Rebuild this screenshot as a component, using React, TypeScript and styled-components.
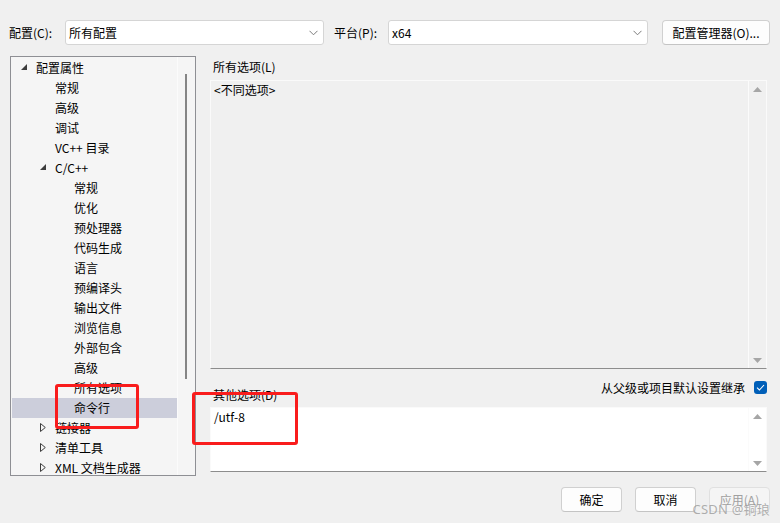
import React from 'react';
import styled, { createGlobalStyle } from 'styled-components';

const GlobalStyle = createGlobalStyle`
  html, body {
    margin: 0;
    padding: 0;
    background: #f0f0f0;
  }
  body {
    font-family: "Noto Sans CJK SC", "Noto Sans", sans-serif;
    font-size: 12px;
    color: #000;
  }
`;

type TreeItem = {
  label: string;
  level: number;
  toggle?: 'open' | 'closed';
  selected?: boolean;
};

const TREE: TreeItem[] = [
  { label: '配置属性', level: 0, toggle: 'open' },
  { label: '常规', level: 1 },
  { label: '高级', level: 1 },
  { label: '调试', level: 1 },
  { label: 'VC++ 目录', level: 1 },
  { label: 'C/C++', level: 1, toggle: 'open' },
  { label: '常规', level: 2 },
  { label: '优化', level: 2 },
  { label: '预处理器', level: 2 },
  { label: '代码生成', level: 2 },
  { label: '语言', level: 2 },
  { label: '预编译头', level: 2 },
  { label: '输出文件', level: 2 },
  { label: '浏览信息', level: 2 },
  { label: '外部包含', level: 2 },
  { label: '高级', level: 2 },
  { label: '所有选项', level: 2 },
  { label: '命令行', level: 2, selected: true },
  { label: '链接器', level: 1, toggle: 'closed' },
  { label: '清单工具', level: 1, toggle: 'closed' },
  { label: 'XML 文档生成器', level: 1, toggle: 'closed' },
];

const Window = styled.div`
  position: relative;
  width: 780px;
  height: 523px;
  overflow: hidden;
  display: flex;
  flex-direction: column;
`;

const TopBar = styled.div`
  display: flex;
  align-items: center;
  height: 25px;
  margin-top: 20px;
  padding-left: 9px;
`;

const FieldLabel = styled.span<{ $w: number }>`
  width: ${(p) => p.$w}px;
  white-space: nowrap;
`;

const Combo = styled.div<{ $w: number }>`
  width: ${(p) => p.$w}px;
  height: 25px;
  box-sizing: border-box;
  background: #fff;
  border: 1px solid #d5d5d5;
  border-radius: 3px;
  display: flex;
  align-items: center;
  justify-content: space-between;
  padding: 0 5px 0 3px;
  margin-right: ${(p) => (p.$w > 259 ? 14 : 10)}px;
`;

const TopButton = styled.div`
  width: 108px;
  height: 25px;
  box-sizing: border-box;
  background: #fdfdfd;
  border: 1px solid #d0d0d0;
  border-bottom-color: #c4c4c4;
  border-radius: 4px;
  display: flex;
  align-items: center;
  justify-content: center;
`;

const Main = styled.div`
  display: flex;
  height: 420px;
  margin-top: 11px;
  padding-left: 10px;
`;

const Tree = styled.div`
  width: 186px;
  box-sizing: border-box;
  border: 1px solid #8e8f94;
  background: #f5f5f5;
  display: flex;
  overflow: hidden;
`;

const TreeList = styled.div`
  flex: 1;
  padding: 1px 0 0 1px;
`;

const TreeRow = styled.div<{ $level: number; $selected?: boolean }>`
  height: 20px;
  box-sizing: border-box;
  display: flex;
  align-items: center;
  padding: 0 0 2px ${(p) => 9 + p.$level * 19}px;
  background: ${(p) => (p.$selected ? '#cccedb' : 'transparent')};
  white-space: nowrap;
`;

const Toggle = styled.span`
  width: 15px;
  height: 18px;
  display: flex;
  align-items: center;
  flex-shrink: 0;
`;

const TreeScroll = styled.div`
  width: 17px;
  border-left: 1px solid #fbfbfb;
  padding-top: 17px;
`;

const Thumb = styled.div`
  width: 2px;
  height: 305px;
  margin-left: 7px;
  background: #858585;
`;

const RightPanel = styled.div`
  width: 557px;
  margin-left: 14px;
  display: flex;
  flex-direction: column;
`;

const PanelLabel = styled.div`
  height: 20px;
  line-height: 18px;
  margin-top: 2px;
  padding-left: 3px;
`;

const TextArea = styled.div<{ $h: number; $bg: string }>`
  height: ${(p) => p.$h}px;
  box-sizing: border-box;
  background: ${(p) => p.$bg};
  border: 1px solid #fafafa;
  border-bottom-color: #8d8d8d;
  display: flex;
  margin-top: ${(p) => (p.$bg === '#fff' ? 0 : 2)}px;
`;

const AreaText = styled.div`
  flex: 1;
  padding: 1px 3px;
  line-height: 16px;
`;

const AreaScroll = styled.div`
  width: 17px;
  border-left: 1px solid #fbfbfb;
  display: flex;
  flex-direction: column;
  justify-content: space-between;
  align-items: center;
  padding: 6px 0 5px;
`;

const OptionsRow = styled.div`
  height: 38px;
  display: flex;
  justify-content: space-between;
`;

const OtherLabel = styled.div`
  align-self: flex-end;
  padding: 0 0 5px 3px;
  line-height: 14px;
`;

const Inherit = styled.label`
  display: flex;
  align-items: center;
  gap: 9px;
  margin-top: 11px;
  height: 14px;
`;

const CheckBox = styled.span`
  width: 13px;
  height: 13px;
  border-radius: 3px;
  background: #005fb8;
  display: flex;
  align-items: center;
  justify-content: center;
`;

const BottomBar = styled.div`
  display: flex;
  justify-content: flex-end;
  gap: 13px;
  margin-top: 11px;
  padding-right: 10px;
`;

const DialogButton = styled.div<{ $disabled?: boolean }>`
  width: 61px;
  height: 25px;
  box-sizing: border-box;
  background: ${(p) => (p.$disabled ? '#f5f5f5' : '#fdfdfd')};
  border: 1px solid ${(p) => (p.$disabled ? '#e0e0e0' : '#d0d0d0')};
  border-bottom-color: ${(p) => (p.$disabled ? '#e0e0e0' : '#c4c4c4')};
  border-radius: 4px;
  color: ${(p) => (p.$disabled ? '#a0a0a0' : '#000')};
  display: flex;
  align-items: center;
  justify-content: center;
`;

const Annotation = styled.div<{ $x: number; $y: number; $w: number; $h: number }>`
  position: absolute;
  left: ${(p) => p.$x}px;
  top: ${(p) => p.$y}px;
  width: ${(p) => p.$w}px;
  height: ${(p) => p.$h}px;
  box-sizing: border-box;
  border: 3px solid #f91c1c;
  border-radius: 3px;
`;

// watermark from the screenshot source, lies over the Apply button
const Watermark = styled.div`
  position: absolute;
  right: 10px;
  top: 499px;
  font-family: "Noto Sans", "Noto Sans CJK SC", sans-serif;
  font-size: 13px;
  color: rgba(150, 150, 150, 0.75);
  letter-spacing: 0.2px;
`;

const Chevron = () => (
  <svg width="9" height="6" viewBox="0 0 9 6">
    <path d="M0.5 0.8 L4.5 4.8 L8.5 0.8" fill="none" stroke="#7a7a7a" strokeWidth="1" />
  </svg>
);

const OpenTriangle = () => (
  <svg width="6" height="6" viewBox="0 0 6 6">
    <path d="M6 0 L6 6 L0 6 Z" fill="#3c3c3c" />
  </svg>
);

const ClosedTriangle = () => (
  <svg width="6" height="9" viewBox="0 0 6 9">
    <path d="M0.5 0.5 L5.3 4.5 L0.5 8.5 Z" fill="none" stroke="#3c3c3c" strokeWidth="1" />
  </svg>
);

const Arrow = ({ down }: { down?: boolean }) => (
  <svg width="9" height="5" viewBox="0 0 9 5">
    <path d={down ? 'M0 0 L9 0 L4.5 5 Z' : 'M0 5 L9 5 L4.5 0 Z'} fill="#a6a6a6" />
  </svg>
);

const Check = () => (
  <svg width="9" height="7" viewBox="0 0 9 7">
    <path d="M1 3.6 L3.4 6 L8 1" fill="none" stroke="#fff" strokeWidth="1.1" />
  </svg>
);

const App = () => (
  <Window>
    <GlobalStyle />
    <TopBar>
      <FieldLabel $w={56}>配置(C):</FieldLabel>
      <Combo $w={259}>
        <span>所有配置</span>
        <Chevron />
      </Combo>
      <FieldLabel $w={54}>平台(P):</FieldLabel>
      <Combo $w={260}>
        <span>x64</span>
        <Chevron />
      </Combo>
      <TopButton>配置管理器(O)...</TopButton>
    </TopBar>

    <Main>
      <Tree>
        <TreeList>
          {TREE.map((item, i) => (
            <TreeRow key={i} $level={item.level} $selected={item.selected}>
              <Toggle>
                {item.toggle === 'open' && <OpenTriangle />}
                {item.toggle === 'closed' && <ClosedTriangle />}
              </Toggle>
              {item.label}
            </TreeRow>
          ))}
        </TreeList>
        <TreeScroll>
          <Thumb />
        </TreeScroll>
      </Tree>

      <RightPanel>
        <PanelLabel>所有选项(L)</PanelLabel>
        <TextArea $h={289} $bg="#f0f0f0">
          <AreaText>&lt;不同选项&gt;</AreaText>
          <AreaScroll>
            <Arrow />
            <Arrow down />
          </AreaScroll>
        </TextArea>
        <OptionsRow>
          <OtherLabel>其他选项(D)</OtherLabel>
          <Inherit>
            从父级或项目默认设置继承
            <CheckBox>
              <Check />
            </CheckBox>
          </Inherit>
        </OptionsRow>
        <TextArea $h={65} $bg="#fff">
          <AreaText>/utf-8</AreaText>
          <AreaScroll>
            <Arrow />
            <Arrow down />
          </AreaScroll>
        </TextArea>
      </RightPanel>
    </Main>

    <BottomBar>
      <DialogButton>确定</DialogButton>
      <DialogButton>取消</DialogButton>
      <DialogButton $disabled>应用(A)</DialogButton>
    </BottomBar>

    <Annotation $x={55} $y={384} $w={84} $h={45} />
    <Annotation $x={192} $y={392} $w={106} $h={53} />
    <Watermark>CSDN @铜琅</Watermark>
  </Window>
);

export default App;
